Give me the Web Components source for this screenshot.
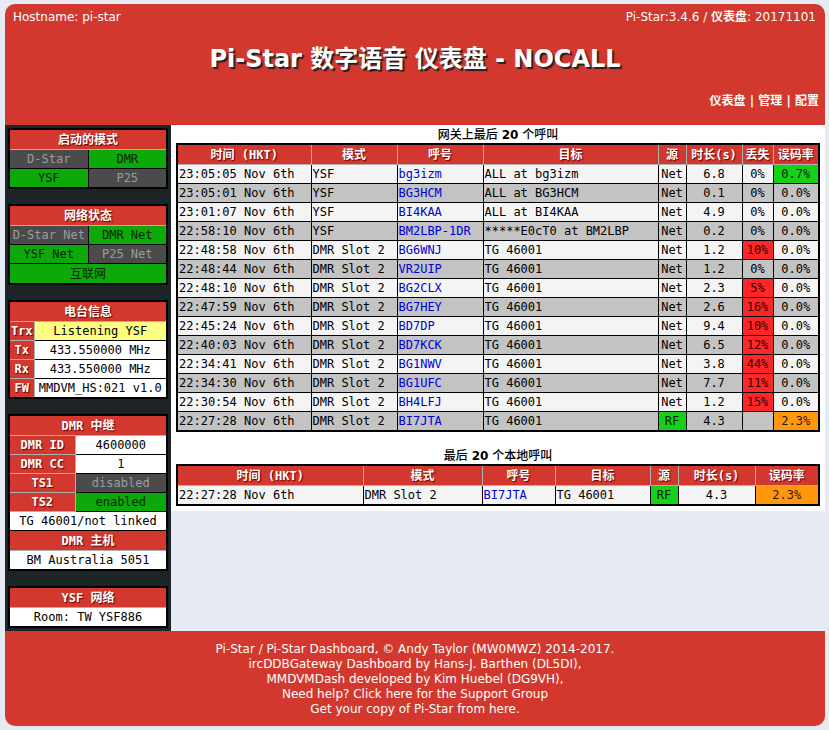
<!DOCTYPE html>
<html lang="zh-CN">
<head>
<meta charset="utf-8">
<title>Pi-Star 数字语音 仪表盘 - NOCALL</title>
<style>
  :root {
    --red: #d2382d;
    --ui: "DejaVu Sans", "Noto Sans CJK SC", sans-serif;
    --mono: "DejaVu Sans Mono", "Noto Sans CJK SC", monospace;
  }
  body { margin: 4px 4px 4px 5px; background: #e6ebf3; font: 500 12px/15px var(--ui); }
</style>
</head>
<body>
<pi-dashboard></pi-dashboard>

<template id="table-css">
  <style>
    :host { display: block; }
    table {
      width: 100%; table-layout: fixed; border-collapse: collapse;
      border: 2px solid #000; font: 12px/18px var(--mono); color: #000; text-align: center;
    }
    th, td { padding: 0 1px; height: 18px; white-space: nowrap; overflow: hidden; }
    th {
      border: 1px solid #b0b0b0; background: var(--red); color: #fff;
      font-weight: bold; text-shadow: 1px 1px 1px #600;
    }
    th.key { padding: 0; }
    th.head { height: 17px; line-height: 17px; padding-top: 2px; }
    td { border: 1px solid #000; background: #fff; }
    td.on { background: #0da80a; color: #002800; }
    td.off { background: #4b4b4b; color: #9c9c9c; }
    td.listen { background: #ffff82; }
    td.tall { height: 17px; line-height: 17px; padding-top: 2px; }
    .calls td { background: #f4f4f4; }
    .calls tr:nth-child(even) td { background: #c3c3c3; }
    .calls td.left { text-align: left; }
    .calls tr td.good { background: #17d018; color: #002800; }
    .calls tr td.bad { background: #ff2626; color: #300; }
    .calls tr td.warn { background: #ff980e; color: #301800; }
    a { color: #0000d4; text-decoration: none; }
  </style>
</template>

<script>
const tableCss = document.getElementById('table-css');

function shadow(el, html, withTable) {
  const root = el.attachShadow({ mode: 'open' });
  if (withTable) root.append(tableCss.content.cloneNode(true));
  const t = document.createElement('template');
  t.innerHTML = html;
  root.append(t.content);
  return root;
}
const cols = list => `<colgroup>${list.map(w => `<col style="width:${w}px">`).join('')}</colgroup>`;

const panels = {
  modes: { cols: [79, 79], rows: [
    [['启动的模式', 'head']],
    [['D-Star', 'off'], ['DMR', 'on']],
    [['YSF', 'on'], ['P25', 'off']]] },
  network: { cols: [79, 79], rows: [
    [['网络状态', 'head']],
    [['D-Star Net', 'off'], ['DMR Net', 'on']],
    [['YSF Net', 'on'], ['P25 Net', 'off']],
    [['互联网', 'on tall']]] },
  radio: { cols: [25, 133], rows: [
    [['电台信息', 'head']],
    [['Trx', 'key'], ['Listening YSF', 'listen']],
    [['Tx', 'key'], ['433.550000 MHz', '']],
    [['Rx', 'key'], ['433.550000 MHz', '']],
    [['FW', 'key'], ['MMDVM_HS:021 v1.0', '']]] },
  dmr: { cols: [66, 92], rows: [
    [['DMR 中继', 'head']],
    [['DMR ID', 'key'], ['4600000', '']],
    [['DMR CC', 'key'], ['1', '']],
    [['TS1', 'key'], ['disabled', 'off']],
    [['TS2', 'key'], ['enabled', 'on']],
    [['TG 46001/not linked', '']],
    [['DMR 主机', 'head']],
    [['BM Australia 5051', '']]] },
  ysf: { cols: [79, 79], rows: [
    [['YSF 网络', 'head']],
    [['Room: TW YSF886', '']]] }
};

customElements.define('pi-panel', class extends HTMLElement {
  connectedCallback() {
    if (this.shadowRoot) return;
    const p = panels[this.getAttribute('name')];
    const body = p.rows.map(r => '<tr>' + r.map(([text, cls]) => {
      const tag = cls === 'head' || cls === 'key' ? 'th' : 'td';
      const scope = cls === 'key' ? ' scope="row"' : '';
      return `<${tag} class="${cls}"${scope}${r.length === 1 ? ' colspan="2"' : ''}>${text}</${tag}>`;
    }).join('') + '</tr>').join('');
    shadow(this, `<table>${cols(p.cols)}<tbody>${body}</tbody></table>`, true);
  }
});

const calls = {
  gateway: {
    cols: [134, 86, 86, 175, 28, 56, 31, 46],
    heads: ['时间 (HKT)', '模式', '呼号', '目标', '源', '时长(s)', '丢失', '误码率'],
    rows: [
      ['23:05:05', 'YSF', 'bg3izm', 'ALL at bg3izm', 'Net', '6.8', '0%', '0.7%'],
      ['23:05:01', 'YSF', 'BG3HCM', 'ALL at BG3HCM', 'Net', '0.1', '0%', '0.0%'],
      ['23:01:07', 'YSF', 'BI4KAA', 'ALL at BI4KAA', 'Net', '4.9', '0%', '0.0%'],
      ['22:58:10', 'YSF', 'BM2LBP-1DR', '*****E0cT0 at BM2LBP', 'Net', '0.2', '0%', '0.0%'],
      ['22:48:58', 'DMR Slot 2', 'BG6WNJ', 'TG 46001', 'Net', '1.2', '10%', '0.0%'],
      ['22:48:44', 'DMR Slot 2', 'VR2UIP', 'TG 46001', 'Net', '1.2', '0%', '0.0%'],
      ['22:48:10', 'DMR Slot 2', 'BG2CLX', 'TG 46001', 'Net', '2.3', '5%', '0.0%'],
      ['22:47:59', 'DMR Slot 2', 'BG7HEY', 'TG 46001', 'Net', '2.6', '16%', '0.0%'],
      ['22:45:24', 'DMR Slot 2', 'BD7DP', 'TG 46001', 'Net', '9.4', '10%', '0.0%'],
      ['22:40:03', 'DMR Slot 2', 'BD7KCK', 'TG 46001', 'Net', '6.5', '12%', '0.0%'],
      ['22:34:41', 'DMR Slot 2', 'BG1NWV', 'TG 46001', 'Net', '3.8', '44%', '0.0%'],
      ['22:34:30', 'DMR Slot 2', 'BG1UFC', 'TG 46001', 'Net', '7.7', '11%', '0.0%'],
      ['22:30:54', 'DMR Slot 2', 'BH4LFJ', 'TG 46001', 'Net', '1.2', '15%', '0.0%'],
      ['22:27:28', 'DMR Slot 2', 'BI7JTA', 'TG 46001', 'RF', '4.3', '', '2.3%']]
  },
  local: {
    cols: [186, 119, 73, 95, 28, 77, 64],
    heads: ['时间 (HKT)', '模式', '呼号', '目标', '源', '时长(s)', '误码率'],
    rows: [['22:27:28', 'DMR Slot 2', 'BI7JTA', 'TG 46001', 'RF', '4.3', '2.3%']]
  }
};

customElements.define('pi-calls', class extends HTMLElement {
  connectedCallback() {
    if (this.shadowRoot) return;
    const d = calls[this.getAttribute('name')];
    const cell = (v, i) => {
      const head = d.heads[i];
      if (i === 0) return `<td class="left">${v} Nov 6th</td>`;
      if (head === '呼号') return `<td class="left"><a href="#${v}">${v}</a></td>`;
      if (i < 4) return `<td class="left">${v}</td>`;
      let cls = '';
      if (v === 'RF') cls = 'good';
      if (head === '丢失' && parseFloat(v) > 3) cls = 'bad';
      if (head === '误码率' && parseFloat(v) > 0) cls = parseFloat(v) < 2 ? 'good' : 'warn';
      return `<td class="${cls}">${v}</td>`;
    };
    shadow(this, `
      <style>h2 { margin: 0; padding-top: 2px; font: 500 12px/16px var(--ui); text-align: center; color: #000; }</style>
      <h2><slot></slot></h2>
      <table>${cols(d.cols)}
        <thead><tr>${d.heads.map(h => `<th class="head" scope="col">${h}</th>`).join('')}</tr></thead>
        <tbody class="calls">${d.rows.map(r => `<tr>${r.map(cell).join('')}</tr>`).join('')}</tbody>
      </table>`, true);
  }
});

customElements.define('pi-header', class extends HTMLElement {
  connectedCallback() {
    if (this.shadowRoot) return;
    shadow(this, `
      <style>
        :host { display: block; background: var(--red); color: #fff; padding-bottom: 10px; }
        .top { display: flex; justify-content: space-between; padding: 0 9px 0 8px; line-height: 26px; }
        h1 { margin: 0; padding-top: 1px; font: bold 24px/56px var(--ui); text-align: center; text-shadow: 2px 2px 1px #222; }
        nav { padding-right: 6px; text-align: right; line-height: 28px; font-weight: bold; }
        a { color: #fff; text-decoration: none; }
      </style>
      <div class="top"><slot name="host"></slot><slot name="version"></slot></div>
      <h1><slot></slot></h1>
      <nav><a href="#dashboard">仪表盘</a> | <a href="#admin">管理</a> | <a href="#config">配置</a></nav>`);
  }
});

customElements.define('pi-footer', class extends HTMLElement {
  connectedCallback() {
    if (this.shadowRoot) return;
    shadow(this, `
      <style>
        :host { display: block; background: var(--red); color: #fff; padding: 11px 10px 9px; text-align: center; }
        a { color: #fff; text-decoration: none; }
      </style>
      Pi-Star / Pi-Star Dashboard, © Andy Taylor (MW0MWZ) 2014-2017.<br>
      ircDDBGateway Dashboard by Hans-J. Barthen (DL5DI),<br>
      MMDVMDash developed by Kim Huebel (DG9VH),<br>
      Need help? Click <a href="#support">here</a> for the Support Group<br>
      Get your copy of Pi-Star from <a href="#download">here</a>.`);
  }
});

customElements.define('pi-dashboard', class extends HTMLElement {
  connectedCallback() {
    if (this.shadowRoot) return;
    shadow(this, `
      <style>
        :host { display: block; border-radius: 10px; overflow: hidden; }
        .middle { display: grid; grid-template-columns: 166px minmax(0, 1fr); align-items: start; }
        aside { display: grid; grid-template-columns: minmax(0, 1fr); gap: 15px; padding: 3px; background: #1d2426; }
        main { display: grid; gap: 14px; padding: 0 5px 5px; background: #fff; }
        b { font-weight: bold; }
      </style>
      <pi-header>
        <span slot="host">Hostname: pi-star</span>
        <span slot="version">Pi-Star:3.4.6 / <b>仪表盘</b>: 20171101</span>
        Pi-Star 数字语音 仪表盘 - NOCALL
      </pi-header>
      <div class="middle">
        <aside>
          <pi-panel name="modes"></pi-panel>
          <pi-panel name="network"></pi-panel>
          <pi-panel name="radio"></pi-panel>
          <pi-panel name="dmr"></pi-panel>
          <pi-panel name="ysf"></pi-panel>
        </aside>
        <main>
          <pi-calls name="gateway">网关上最后 <b>20</b> 个呼叫</pi-calls>
          <pi-calls name="local">最后 <b>20</b> 个本地呼叫</pi-calls>
        </main>
      </div>
      <pi-footer></pi-footer>`);
  }
});
</script>
</body>
</html>
